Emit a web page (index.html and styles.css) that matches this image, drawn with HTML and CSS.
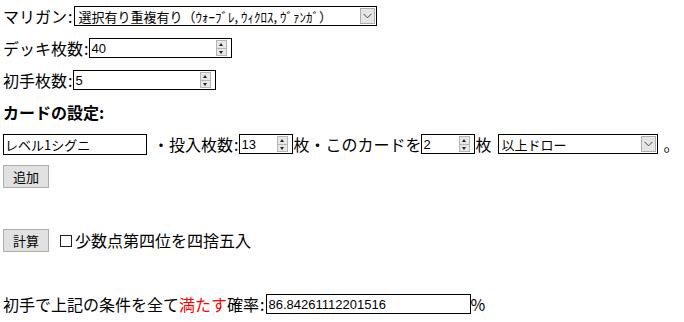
FILE: index.html
```html
<!DOCTYPE html>
<html lang="ja">
<head>
<meta charset="utf-8">
<title>初手確率計算</title>
<link rel="stylesheet" href="styles.css">
</head>
<body>
<div class="page">
  <div class="row">
    <span class="label">マリガン<span class="colon">:</span></span>
    <span class="sel sel-mulligan">
      <select class="sel-input"><option>選択有り重複有り（ｳｫｰﾌﾞﾚ, ｳｨｸﾛｽ, ｳﾞｧﾝｶﾞ）</option></select>
      <span class="sel-arrow"><svg width="9" height="6" viewBox="0 0 9 6"><path d="M0.5 0.8 L4.5 4.8 L8.5 0.8" fill="none" stroke="#444" stroke-width="1"/></svg></span>
    </span>
  </div>
  <div class="row">
    <span class="label">デッキ枚数<span class="colon">:</span></span>
    <span class="num num-wide"><input class="num-input" value="40"><span class="spin"><span class="spin-up"></span><span class="spin-down"></span></span></span>
  </div>
  <div class="row">
    <span class="label">初手枚数<span class="colon">:</span></span>
    <span class="num num-wide"><input class="num-input" value="5"><span class="spin"><span class="spin-up"></span><span class="spin-down"></span></span></span>
  </div>
  <div class="row">
    <strong class="heading">カードの設定:</strong>
  </div>
  <div class="row">
    <input class="text-input" value="レベル1シグニ">
    <span class="label gap-left">・投入枚数<span class="colon">:</span></span>
    <span class="num num-small"><input class="num-input" value="13"><span class="spin"><span class="spin-up"></span><span class="spin-down"></span></span></span>
    <span class="label">枚・このカードを</span>
    <span class="num num-small"><input class="num-input" value="2"><span class="spin"><span class="spin-up"></span><span class="spin-down"></span></span></span>
    <span class="label">枚</span>
    <span class="sel sel-draw">
      <select class="sel-input"><option>以上ドロー</option></select>
      <span class="sel-arrow"><svg width="9" height="6" viewBox="0 0 9 6"><path d="M0.5 0.8 L4.5 4.8 L8.5 0.8" fill="none" stroke="#444" stroke-width="1"/></svg></span>
    </span>
    <span class="label gap-left">。</span>
  </div>
  <div class="row">
    <button class="btn">追加</button>
  </div>
  <div class="row"></div>
  <div class="row">
    <button class="btn">計算</button>
    <label class="chk"><input type="checkbox" class="chk-box"><span>少数点第四位を四捨五入</span></label>
  </div>
  <div class="row"></div>
  <div class="row">
    <span class="label">初手で上記の条件を全て<span class="red">満たす</span>確率<span class="colon">:</span></span>
    <input class="result-input" value="86.84261112201516">
    <span class="label">%</span>
  </div>
</div>
</body>
</html>
```

FILE: styles.css
```css
html, body {
  margin: 0;
  padding: 0;
  background: #fff;
}

body {
  font-family: "Noto Sans CJK JP", "Noto Sans", sans-serif;
  font-size: 16px;
  color: #000;
}

.page {
  padding-left: 3px;
}

.row {
  height: 32px;
  display: flex;
  align-items: center;
  white-space: nowrap;
}

.label {
  line-height: 20px;
}

.colon {
  margin-left: 1px;
  margin-right: 1px;
}

.gap-left {
  margin-left: 6px;
}

.heading {
  font-weight: bold;
  font-size: 16px;
}

.red {
  color: #f00;
}

/* select boxes */
.sel {
  display: inline-flex;
  align-items: center;
  box-sizing: border-box;
  height: 20px;
  border: 1px solid #000;
  background: #fff;
  margin-left: 1px;
}

.sel-mulligan {
  width: 303px;
}

.sel-draw {
  width: 160px;
  margin-left: 6px;
}

.sel-input {
  appearance: none;
  -webkit-appearance: none;
  border: 0;
  outline: none;
  background: transparent;
  flex: 1;
  min-width: 0;
  height: 18px;
  padding: 0 0 0 3px;
  font-family: "Noto Sans CJK JP", sans-serif;
  font-size: 13px;
  color: #000;
}

.sel-arrow {
  width: 15px;
  height: 16px;
  box-sizing: border-box;
  margin-right: 1px;
  background: #e5e5e5;
  border: 1px solid #adadad;
  display: flex;
  align-items: center;
  justify-content: center;
}

/* number inputs */
.num {
  display: inline-flex;
  align-items: center;
  box-sizing: border-box;
  height: 20px;
  border: 1px solid #000;
  background: #fff;
  margin-left: 0;
}

.num-wide {
  width: 143px;
}

.num-small {
  width: 54px;
}

.num-input {
  border: 0;
  outline: none;
  flex: 1;
  min-width: 0;
  height: 18px;
  padding: 0 0 0 1px;
  font-family: "Liberation Sans", "Noto Sans CJK JP", sans-serif;
  font-size: 13px;
  color: #000;
  background: transparent;
}

.spin {
  display: flex;
  flex-direction: column;
  width: 11px;
  height: 16px;
  margin-right: 4px;
  box-sizing: border-box;
  border: 1px solid #b5b5b5;
  background: #e8e8e8;
}

.spin-up,
.spin-down {
  flex: 1;
  position: relative;
}

.spin-up {
  border-bottom: 1px solid #b5b5b5;
}

.spin-up::after,
.spin-down::after {
  content: "";
  position: absolute;
  left: 2px;
  width: 0;
  height: 0;
  border-left: 2.5px solid transparent;
  border-right: 2.5px solid transparent;
}

.spin-up::after {
  top: 2px;
  border-bottom: 3px solid #222;
}

.spin-down::after {
  top: 2px;
  border-top: 3px solid #222;
}

/* text input */
.text-input {
  box-sizing: border-box;
  width: 144px;
  height: 21px;
  border: 1px solid #000;
  outline: none;
  padding: 0 0 0 1px;
  font-family: "Noto Sans CJK JP", sans-serif;
  font-size: 13px;
  color: #000;
}

/* buttons */
.btn {
  box-sizing: border-box;
  width: 46px;
  height: 23px;
  padding: 0;
  border: 1px solid #adadad;
  background: #e1e1e1;
  font-family: "Noto Sans CJK JP", sans-serif;
  font-size: 13px;
  color: #000;
  border-radius: 0;
}

/* checkbox */
.chk {
  display: inline-flex;
  align-items: center;
  margin-left: 11px;
  line-height: 20px;
}

.chk-box {
  appearance: none;
  -webkit-appearance: none;
  box-sizing: border-box;
  width: 12px;
  height: 12px;
  margin: 1px 3px 0 0;
  border: 1px solid #222;
  background: #fff;
}

/* result */
.result-input {
  box-sizing: border-box;
  width: 205px;
  height: 20px;
  border: 1px solid #000;
  outline: none;
  padding: 0 0 0 2px;
  margin-left: 0;
  font-family: "Liberation Sans", sans-serif;
  font-size: 13px;
  color: #000;
}
```
